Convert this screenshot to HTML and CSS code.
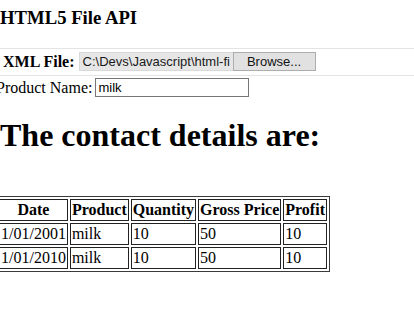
FILE: index.html
```html
<!DOCTYPE html>
<html>
<head>
<meta charset="utf-8">
<title>HTML5 File API</title>
<link rel="stylesheet" href="styles.css">
</head>
<body>
<h3 class="title">HTML5 File API</h3>
<div class="row file-row">
  <label class="file-label">XML File:</label>
  <div class="file-input">
    <span class="file-name">C:\Devs\Javascript\html-fi</span>
    <span class="file-btn">Browse...</span>
  </div>
</div>
<div class="row product-row">
  <label class="product-label">Product Name:</label>
  <input class="product-input" type="text" value="milk">
</div>
<h1 class="heading">The contact details are:</h1>
<table class="data">
  <thead>
    <tr><th>Date</th><th>Product</th><th>Quantity</th><th>Gross Price</th><th>Profit</th></tr>
  </thead>
  <tbody>
    <tr><td>1/01/2001</td><td>milk</td><td>10</td><td>50</td><td>10</td></tr>
    <tr><td>1/01/2010</td><td>milk</td><td>10</td><td>50</td><td>10</td></tr>
  </tbody>
</table>
</body>
</html>
```
FILE: styles.css
```css
html, body {
  margin: 0;
  padding: 0;
  background: #ffffff;
  color: #000000;
  font-family: "Liberation Serif", "Times New Roman", serif;
  font-size: 16px;
}

.title {
  margin: 7px 0 0 0;
  font-size: 18.72px;
  line-height: 22px;
  font-weight: bold;
}

.row {
  display: flex;
  align-items: center;
}

.file-row {
  margin-top: 19px;
  border-top: 1px solid #e4e4e4;
  border-bottom: 1px solid #e4e4e4;
  padding: 3px 0 4px 3px;
  gap: 4px;
}

.file-label {
  font-weight: bold;
  line-height: 19px;
}

.file-input {
  display: flex;
  height: 19px;
  font-family: "Liberation Sans", Arial, sans-serif;
  font-size: 13px;
}

.file-name {
  box-sizing: border-box;
  width: 154px;
  height: 19px;
  padding: 0 0 0 3px;
  background: #e6e6e6;
  border: 1px solid #d9d9d9;
  border-right: none;
  line-height: 17px;
  white-space: nowrap;
  overflow: hidden;
  color: #1a1a1a;
}

.file-btn {
  box-sizing: border-box;
  width: 83px;
  height: 19px;
  background: #e1e1e1;
  border: 1px solid #adadad;
  line-height: 17px;
  text-align: center;
  color: #111;
}

.product-row {
  padding-top: 2px;
  margin-left: -4px;
  gap: 3px;
}

.product-label {
  line-height: 19px;
}

.product-input {
  box-sizing: border-box;
  width: 154px;
  height: 19px;
  margin: 0;
  padding: 0 2px;
  border: 1px solid #767676;
  font-family: "Liberation Sans", Arial, sans-serif;
  font-size: 13px;
  color: #000;
  background: #fff;
}

.heading {
  margin: 20px 0 0 0;
  font-size: 32px;
  line-height: 36px;
  font-weight: bold;
}

.data {
  margin: 43px 0 0 -4px;
  border: 1px solid #3a3a3a;
  border-collapse: separate;
  border-spacing: 2px;
}

.data th,
.data td {
  border: 1px solid #222;
  padding: 1px;
  text-align: left;
  white-space: nowrap;
}

.data th {
  text-align: center;
  font-weight: bold;
}
```
